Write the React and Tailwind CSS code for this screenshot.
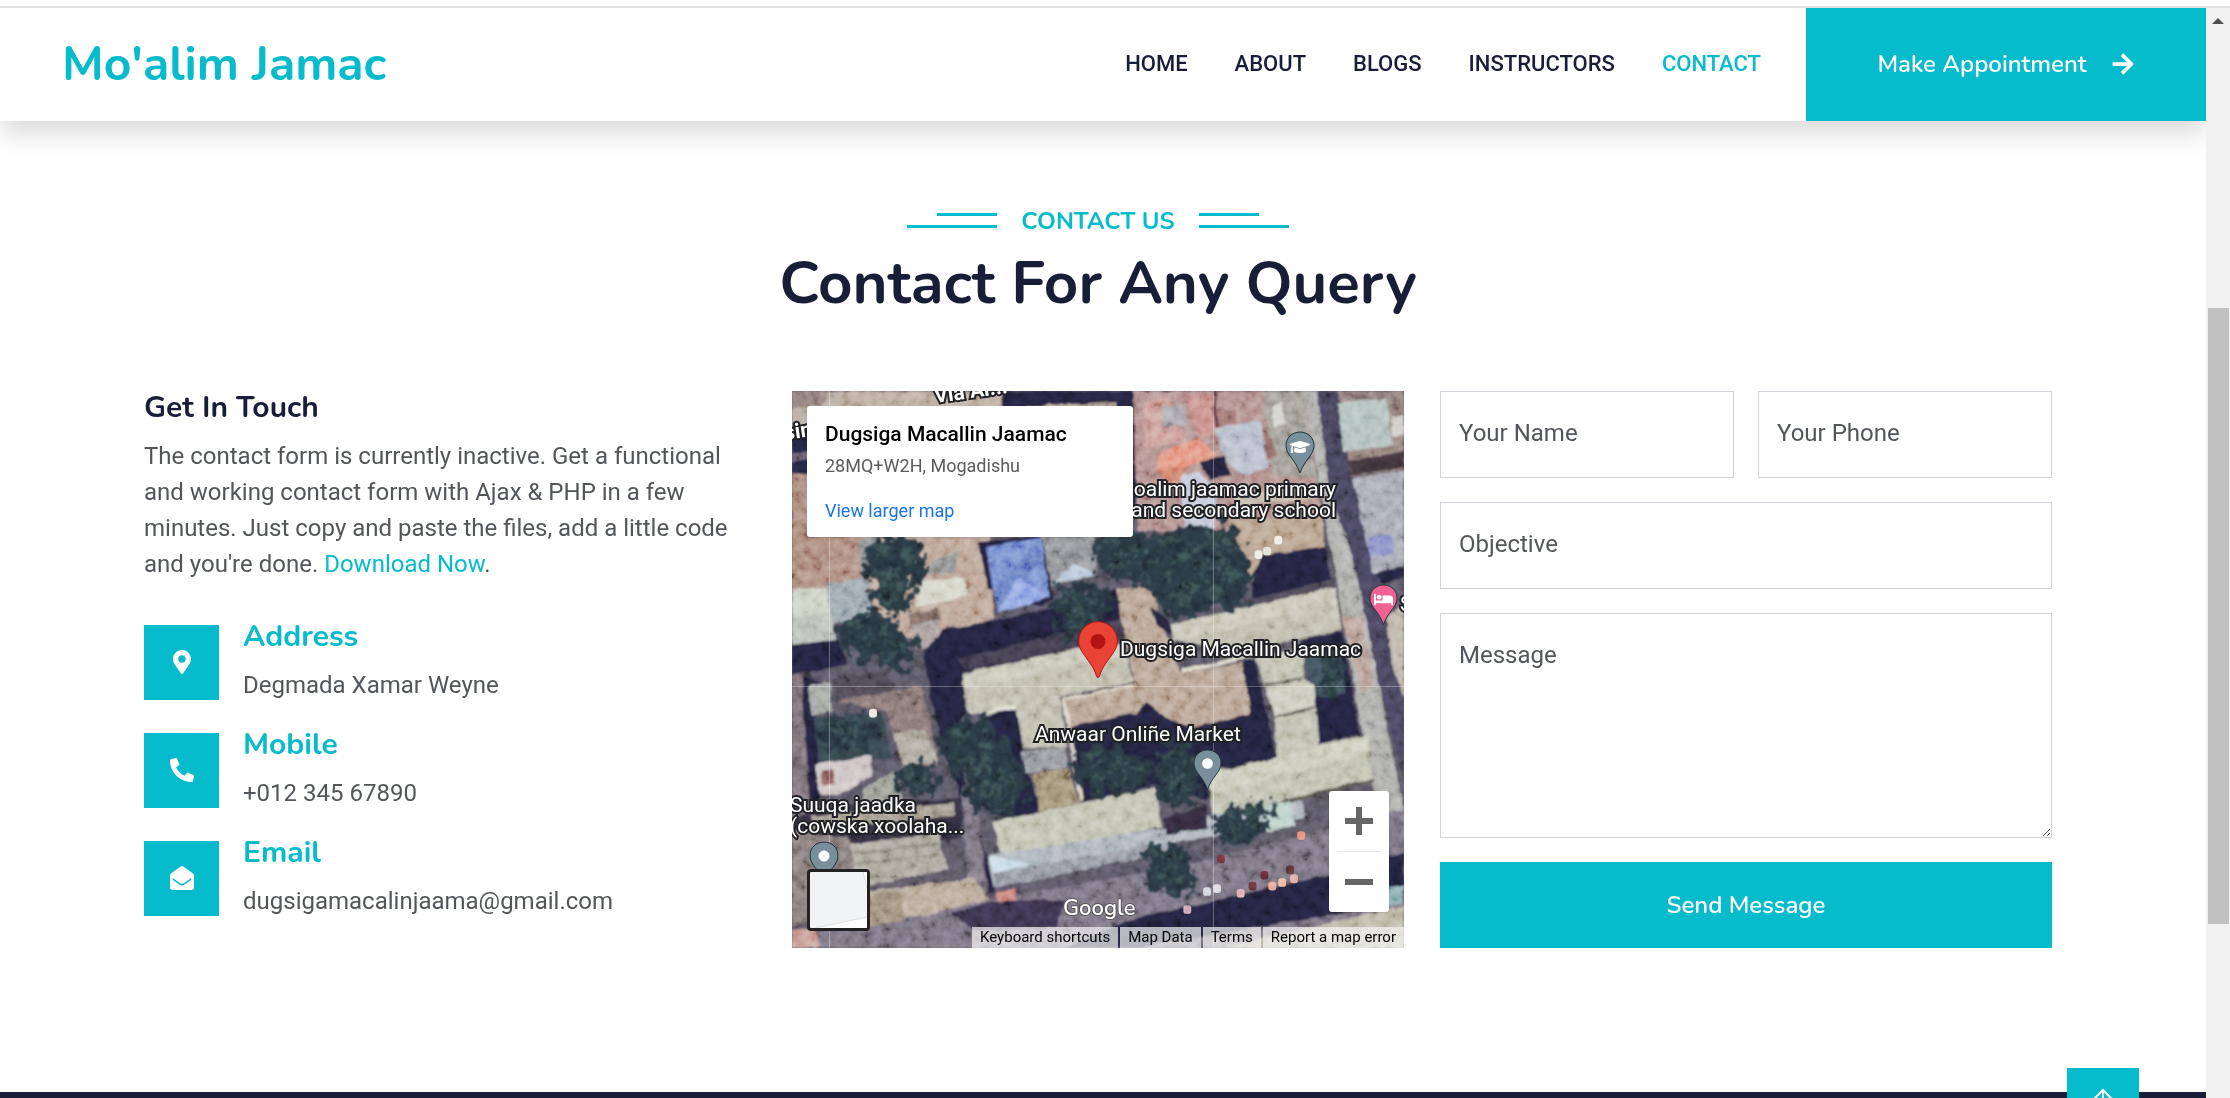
import React from "react";
import { FaArrowRight, FaMapMarkerAlt, FaPhoneAlt, FaEnvelopeOpen, FaGraduationCap, FaBed } from "react-icons/fa";

const NAV = ["HOME", "ABOUT", "BLOGS", "INSTRUCTORS", "CONTACT"];

const NAVY = "#24223c";
const ROOF = "#bab9a8";

/* Ground shapes of the aerial view, painted from back to front. */
const SHAPES = [
  ["#b5a597", "10,11 830,11 830,70 10,130"],
  ["#8d7a78", "10,11 95,11 95,45 10,60"],
  [NAVY, "540,11 880,11 895,330 830,330 830,40 540,62"],
  [NAVY, "10,125 60,115 60,250 10,245"],
  ["#6d6478", "10,185 60,178 60,200 10,210"],
  ["#a78578", "10,240 190,250 190,540 10,570"],
  ["#b89f90", "180,410 510,410 520,640 390,700 230,690"],
  ["#8b8f90", "180,420 230,415 200,540 185,530"],
  ["#c8cfc0", "10,562 98,556 118,705 10,718"],
  ["#b5beb5", "10,640 108,625 118,705 10,718"],
  ["#98a4ad", "98,545 200,530 215,645 112,655"],
  [NAVY, "10,715 130,700 150,770 10,800"],
  ["#878b88", "370,480 430,455 425,515 350,520"],
  ["#d2d3c4", "335,540 445,528 455,580 320,612"],
  ["#7e6a64", "305,630 375,612 385,650 310,665"],
  ["#a59a98", "310,660 382,645 390,715 325,725"],
  [NAVY, "390,672 560,640 840,560 850,700 440,790 450,905 390,1000 345,735"],
  ["#3f3b4c", "430,755 850,640 860,700 445,785"],
  [NAVY, "482,430 650,411 672,590 640,610 505,560"],
  ["#7287cb", "500,445 640,418 662,583 530,628"],
  ["#677cc0", "640,418 645,480 530,628 520,560"],
  ["#8ba0e2", "530,628 582,530 662,583"],
  ["#8a8c90", "640,411 772,411 785,520 668,550"],
  ["#b7c6d8", "668,548 722,490 782,520"],
  ["#ad8a87", "872,11 1310,11 1355,400 885,400"],
  ["#c99a93", "900,40 960,30 1010,150 900,170"],
  ["#a9a5ab", "945,50 995,50 1012,105 945,112"],
  ["#c58a85", "1005,25 1080,25 1085,130 1035,140"],
  ["#5a3540", "1072,11 1082,11 1090,110 1080,110"],
  ["#9a6f6c", "1085,65 1130,60 1145,120 1090,128"],
  ["#e2917b", "940,185 1035,142 1085,190 1010,222 965,292 932,225"],
  ["#cc7c69", "932,225 1010,222 965,292"],
  ["#b4bbc8", "1078,115 1195,92 1218,225 1150,245 1110,205"],
  ["#9d9a92", "1200,12 1305,12 1335,250 1225,245"],
  ["#cfcfc8", "1225,50 1250,45 1260,100 1228,112"],
  ["#8a6663", "1195,110 1225,150 1240,190 1215,200"],
  [NAVY, "1040,205 1105,190 1120,240 1070,262"],
  ["#bfc6d6", "990,250 1040,235 1085,290 1080,400 1005,400"],
  ["#b59e88", "1110,372 1350,350 1362,520 1180,560"],
  ["#c1b8a8", "1130,300 1350,270 1350,310 1140,330"],
  [NAVY, "1200,468 1360,440 1372,550 1170,600 1175,520"],
  ["#4b4655", "1130,600 1380,535 1382,555 1130,620"],
  ["#a9aaa6", "1305,11 1345,11 1560,1190 1558,1300 1475,1100"],
  ["#44425a", "1338,11 1390,11 1425,220 1470,420 1558,850 1558,1090 1500,850 1430,470 1370,300"],
  ["#b79d96", "1400,640 1450,635 1482,830 1452,850"],
  ["#8d7a76", "1390,11 1558,11 1558,230 1425,250"],
  ["#aebcb9", "1392,45 1515,32 1530,160 1405,183"],
  ["#cbc9c2", "1525,85 1558,75 1558,130 1530,140"],
  ["#3c3038", "1415,205 1558,178 1558,222 1430,246"],
  ["#a4a5b0", "1430,255 1558,230 1558,500 1480,518"],
  ["#8187c2", "1465,415 1528,408 1532,462 1470,470"],
  [NAVY, "1485,520 1558,500 1558,530 1500,545"],
  ["#b9b2a6", "1515,640 1558,600 1558,860 1530,780"],
  ["#b49e8d", "830,562 915,556 950,660 990,790 1148,765 1172,915 1010,960 890,905 715,945 695,865 875,820"],
  [NAVY, "915,610 960,640 975,690 930,660"],
  [NAVY, "705,945 880,905 905,875 960,920 1020,945 1170,905 1150,765 1180,750 1235,1030 1085,1060 1060,1145 925,1105 745,1150"],
  [NAVY, "1300,700 1402,678 1445,960 1345,990"],
  ["#3e5058", "1305,750 1395,730 1410,850 1330,860"],
  [ROOF, "440,797 590,760 730,725 850,715 872,815 690,862 705,1000 595,1002 578,885 455,908"],
  ["#c5c5b5", "440,797 730,725 850,715 855,745 735,765 448,845"],
  ["#d9d9cc", "480,905 576,880 582,890 500,916"],
  ["#d9d2c2", "695,866 868,822 870,828 704,872 745,1145 736,1148"],
  [NAVY, "495,912 578,892 595,1010 635,1175 560,1200 480,1140"],
  ["#8e9096", "588,1012 700,1000 705,1055 600,1072"],
  ["#9b8d72", "618,1072 706,1058 738,1160 635,1180"],
  ["#bfbfae", "518,1207 930,1112 946,1226 545,1315"],
  ["#3c3a3c", "545,1312 946,1222 948,1230 548,1322"],
  [ROOF, "970,660 1382,556 1400,672 1210,718 1000,790 1168,745 1180,755 975,700"],
  ["#c5c3b2", "970,660 1382,556 1390,600 975,705"],
  ["#bdbdac", "1182,752 1300,720 1305,808 1332,830 1335,880 1345,992 1465,965 1478,1085 1075,1196 1060,1072 1235,1030 1232,910"],
  ["#c9c9b8", "1060,1072 1235,1030 1465,965 1470,1015 1068,1130"],
  ["#55524c", "1075,1196 1478,1085 1480,1094 1078,1206"],
  ["#6b6960", "1205,822 1300,806 1303,815 1210,832"],
  ["#c9c8ba", "1218,838 1330,825 1332,885 1232,908"],
  ["#55524c", "1232,910 1332,886 1333,892 1234,918"],
  ["#dfdccc", "998,782 1165,742 1168,750 1000,792"],
  ["#756a70", "10,800 35,800 85,1165 10,1200"],
  [NAVY, "35,800 100,830 70,900 85,1050 80,1165 55,1165"],
  ["#9da19b", "50,830 105,820 110,900 60,915"],
  ["#4b4651", "110,810 250,790 265,850 120,865"],
  ["#80706e", "120,870 340,830 380,1050 290,1060 250,900"],
  ["#34444c", "65,920 240,900 262,1030 80,1050"],
  ["#a8a499", "265,960 345,950 380,1040 290,1050"],
  ["#c9bfc1", "72,1048 210,1022 212,1080 120,1135 80,1130"],
  ["#8b5f5c", "85,1065 112,1062 115,1105 88,1108"],
  ["#9a9b90", "190,1120 270,1065 290,1150 190,1165"],
  ["#332e40", "10,1200 90,1165 440,1140 440,1250 60,1300 10,1290"],
  ["#7f7675", "10,1230 150,1250 200,1420 10,1500"],
  ["#9e9788", "60,1190 420,1155 420,1190 60,1230"],
  ["#a5a196", "155,1270 380,1240 402,1340 180,1388"],
  ["#8b877d", "160,1290 385,1262 387,1270 162,1298"],
  ["#8b877d", "168,1320 392,1292 394,1300 170,1328"],
  [NAVY, "340,740 400,800 450,1120 500,1300 525,1405 470,1400 440,1150 385,980"],
  ["#746d78", "440,1100 475,1160 505,1400 455,1390"],
  ["#b5a594", "205,1400 470,1365 520,1440 300,1480 210,1450"],
  ["#9b8a78", "205,1410 280,1395 300,1500 205,1520"],
  ["#736d7a", "10,1515 200,1500 520,1420 1000,1330 1558,1170 1558,1557 10,1557"],
  ["#a8b0b8", "505,1300 950,1225 1060,1190 1300,1150 1310,1195 960,1270 520,1390"],
  ["#8f939c", "520,1350 960,1262 965,1290 525,1390"],
  ["#c8dbe4", "505,1300 540,1310 620,1320 520,1350"],
  ["#b9cfc8", "1200,1160 1270,1150 1285,1215 1205,1235"],
  ["#c98078", "525,1405 575,1392 580,1425 530,1432"],
  ["#322a3e", "950,1195 1060,1160 1060,1225 955,1245"],
  ["#38334c", "410,1460 520,1425 700,1425 680,1500 470,1510"],
  [NAVY, "860,1480 1380,1350 1558,1290 1558,1430 880,1557 700,1557"],
  ["#b9b5a2", "1100,1557 1400,1480 1558,1440 1558,1557"],
  ["#84a9b0", "1500,1395 1558,1380 1558,1430 1515,1440"],
  ["#c4998f", "10,1510 70,1500 80,1557 10,1557"],
];

/* cx, cy, rx, ry of the tree crowns */
const TREES = [
  [272, 480, 78, 75], [262, 560, 58, 65], [205, 690, 78, 65], [265, 725, 55, 60],
  [845, 460, 75, 75], [905, 490, 60, 70], [1010, 450, 110, 60], [1000, 560, 80, 75], [1090, 530, 85, 90],
  [745, 600, 78, 55], [735, 660, 55, 45], [1100, 440, 50, 60],
  [470, 1000, 85, 85], [520, 1090, 80, 90], [540, 1150, 60, 45], [800, 1060, 70, 70], [860, 1070, 60, 55],
  [985, 1050, 60, 70], [990, 1120, 60, 45], [330, 1090, 50, 50], [1140, 1215, 65, 50], [1180, 1190, 45, 35],
  [960, 1310, 60, 45], [970, 1370, 60, 40], [1380, 800, 40, 45], [150, 960, 80, 45],
];

/* x, y, colour of the vehicles and stalls in the street */
const SPOTS = [
  [1190, 465, "#e8ebe2"], [1212, 455, "#dfe2d6"], [1240, 425, "#eeeee6"], [1298, 1245, "#e8907c"],
  [1225, 1385, "#e8a088"], [1250, 1375, "#f0b7a2"], [1280, 1365, "#dfa29c"], [1145, 1405, "#e0aeb0"],
  [1010, 1450, "#d3a9b8"], [1095, 1310, "#6a3038"], [1060, 1400, "#cfd2da"], [1085, 1392, "#d8dade"],
  [1175, 1385, "#5e2f38"], [1205, 1355, "#5e2c35"], [1270, 1340, "#623338"], [215, 905, "#e8e3dc"],
];

function Satellite() {
  return (
    <svg viewBox="0 0 612 557" preserveAspectRatio="xMidYMid slice" className="absolute inset-0 h-full w-full" aria-hidden="true">
      <defs>
        <filter id="rough" x="0" y="0" width="100%" height="100%">
          <feTurbulence type="fractalNoise" baseFrequency="0.06" numOctaves="3" seed="4" />
          <feDisplacementMap in="SourceGraphic" scale="5" xChannelSelector="R" yChannelSelector="G" />
          <feGaussianBlur stdDeviation="0.8" />
        </filter>
        <filter id="leafy" x="0" y="0" width="100%" height="100%">
          <feTurbulence type="fractalNoise" baseFrequency="0.09" numOctaves="4" seed="9" />
          <feDisplacementMap in="SourceGraphic" scale="34" xChannelSelector="R" yChannelSelector="G" />
          <feGaussianBlur stdDeviation="1" />
        </filter>
        <filter id="grain" x="0" y="0" width="100%" height="100%">
          <feTurbulence type="fractalNoise" baseFrequency="0.1" numOctaves="3" seed="21" />
          <feColorMatrix values="1.6 0 0 0 -0.3  1.6 0 0 0 -0.3  1.6 0 0 0 -0.3  0 0 0 0 1" />
        </filter>
      </defs>
      <rect width="612" height="557" fill="#57525f" />
      <g filter="url(#rough)">
        <rect width="612" height="557" fill="#57525f" />
        <g transform="scale(0.3953 0.3603) translate(-10 -11)">
          {SHAPES.map(([fill, points], i) => (
            <polygon key={i} points={points} fill={fill} />
          ))}
        </g>
      </g>
      <g filter="url(#leafy)">
        <rect width="612" height="557" fill="transparent" />
        <g transform="scale(0.3953 0.3603) translate(-10 -11)">
          {TREES.map(([x, y, rx, ry], i) => (
            <ellipse key={i} cx={x} cy={y} rx={rx} ry={ry} fill="#26343c" />
          ))}
          {TREES.map(([x, y, rx, ry], i) => (
            <g key={i} fill="#35494a">
              <ellipse cx={x - rx * 0.4} cy={y - ry * 0.4} rx={rx * 0.3} ry={ry * 0.2} />
              <ellipse cx={x + rx * 0.35} cy={y - ry * 0.1} rx={rx * 0.28} ry={ry * 0.2} />
              <ellipse cx={x - rx * 0.1} cy={y + ry * 0.4} rx={rx * 0.3} ry={ry * 0.18} />
            </g>
          ))}
        </g>
      </g>
      <g transform="scale(0.3953 0.3603) translate(-10 -11)">
        {SPOTS.map(([x, y, fill], i) => (
          <rect key={i} x={x - 10} y={y - 12} width="20" height="24" rx="8" fill={fill} />
        ))}
      </g>
      <rect width="612" height="557" filter="url(#grain)" opacity="0.3" style={{ mixBlendMode: "overlay" }} />
      <path d="M37.500 0V557M421.500 0V557M0 295.500H612" stroke="#fff" strokeOpacity="0.3" />
    </svg>
  );
}

function Pin({ className, fill = "#78909c", children }) {
  return (
    <span className={`absolute ${className}`}>
      <svg viewBox="0 0 30 43" className="block w-full" aria-hidden="true">
        <path d="M15 1C7 1 1 7 1 14.500c0 5 2.500 8.500 5.500 12.500 3.500 4.700 6.500 9 8.500 15 2-6 5-10.300 8.500-15 3-4 5.500-7.500 5.500-12.500C29 7 23 1 15 1z" fill={fill} stroke="#263238" strokeWidth="1" />
        {children}
      </svg>
    </span>
  );
}

const LABEL =
  "absolute whitespace-nowrap text-[21px] leading-[21px] text-white [-webkit-text-stroke:4px_#202124] [paint-order:stroke_fill]";

function MapPanel() {
  return (
    <section aria-label="Map" className="relative min-h-[557px] overflow-hidden bg-[#57525f] font-[Roboto,sans-serif]">
      <Satellite />
      <span className={`${LABEL} left-[142px] top-[-10px] -rotate-8 font-bold`}>Via Al...</span>
      <span className={`${LABEL} left-[-8px] top-[30px] -rotate-8 font-bold`}>sin</span>
      <span className={`${LABEL} right-[68px] top-[88px] text-right`}>
        oalim jaamac primary
        <br />
        and secondary school
      </span>
      <span className={`${LABEL} left-[328px] top-[248px]`}>Dugsiga Macallin Jaamac</span>
      <span className={`${LABEL} left-[243px] top-[333px]`}>Anwaar Onliñe Market</span>
      <span className={`${LABEL} left-[-2px] top-[404px]`}>
        Suuqa jaadka
        <br />
        (cowska xoolaha...
      </span>
      <span className={`${LABEL} left-[608px] top-[203px]`}>S</span>

      <Pin className="left-[493px] top-[40px] w-[30px]">
        <FaGraduationCap x="5" y="6" size="20" color="#fff" />
      </Pin>
      <Pin className="left-[577px] top-[193px] w-[29px]" fill="#f06292">
        <FaBed x="5" y="6" size="20" color="#fff" />
      </Pin>
      <Pin className="left-[401px] top-[358px] w-[29px]">
        <circle cx="15" cy="15" r="5.500" fill="#fff" />
      </Pin>
      <Pin className="left-[17px] top-[450px] w-[30px]">
        <circle cx="15" cy="15" r="5.500" fill="#fff" />
      </Pin>
      <span className="absolute left-[286px] top-[230px] w-[40px]">
        <svg viewBox="0 0 40 57" className="block w-full" aria-hidden="true">
          <path d="M20 .7C9.200.7.700 9.200.700 20c0 6.500 3 10.500 7.300 16.500C12.500 42.500 16.500 48 18.500 55c.5 2 2.500 2 3 0 2-7 6-12.500 10.500-18.500C36.300 30.500 39.300 26.500 39.300 20 39.300 9.200 30.800.7 20 .7z" fill="#ea4335" stroke="#b31412" strokeWidth="1" />
          <circle cx="20" cy="20.500" r="7.500" fill="#b31412" />
        </svg>
      </span>

      <div className="absolute left-[15px] top-[15px] w-[326px] rounded-[3px] bg-white px-[18px] pb-[13px] pt-[14px] shadow">
        <h3 className="text-[21px] font-medium leading-[28px] text-black">Dugsiga Macallin Jaamac</h3>
        <p className="mt-[5px] text-[18px] leading-[26px] text-[#5b5b5b]">28MQ+W2H, Mogadishu</p>
        <a href="#map" className="mt-[19px] block text-[18px] leading-[26px] text-[#1a73e8]">
          View larger map
        </a>
      </div>

      <button type="button" aria-label="Show street map" className="absolute bottom-[17px] left-[15px] h-[62px] w-[63px] overflow-hidden rounded border-[3px] border-[#222] bg-[#f1f3f4]">
        <svg viewBox="0 0 57 56" className="block h-full w-full" aria-hidden="true">
          <path d="M5 56L57 45V56zM53 0h4v16z" fill="#fff" />
          <path d="M5 56L57 45M53 0l4 16" stroke="#dadce0" />
        </svg>
      </button>

      <div className="absolute bottom-9 right-[15px] flex w-[60px] flex-col items-center rounded-[3px] bg-white shadow">
        <button type="button" aria-label="Zoom in" className="grid h-[60px] w-full place-items-center">
          <svg viewBox="0 0 28 28" className="size-7" aria-hidden="true">
            <path d="M11 0h6v11h11v6H17v11h-6V17H0v-6h11z" fill="#666" />
          </svg>
        </button>
        <hr className="w-[45px] border-[#e6e6e6]" />
        <button type="button" aria-label="Zoom out" className="grid h-[60px] w-full place-items-center">
          <svg viewBox="0 0 28 28" className="size-7" aria-hidden="true">
            <path d="M0 11h28v6H0z" fill="#666" />
          </svg>
        </button>
      </div>

      <span className="absolute bottom-[26px] left-[271px] font-[Nunito,sans-serif] text-[22px] font-semibold leading-[28px] text-white [-webkit-text-stroke:2px_#555] [paint-order:stroke_fill]">
        Google
      </span>

      <div className="absolute bottom-0 right-0 flex gap-[2px] whitespace-nowrap text-[15px] leading-[21px] text-black">
        <button type="button" className="bg-[#f5f5f5]/70 px-2">Keyboard shortcuts</button>
        <button type="button" className="bg-[#f5f5f5]/70 px-2">Map Data</button>
        <a href="#terms" className="bg-[#f5f5f5]/70 px-2">Terms</a>
        <a href="#report" className="bg-[#f5f5f5]/70 px-2">Report a map error</a>
      </div>
    </section>
  );
}

const HEADING = "font-[Nunito,'Open_Sans',sans-serif]";

function ContactRow({ icon: Icon, title, children }) {
  return (
    <div className="flex items-center gap-6">
      <div className="grid size-[75px] shrink-0 place-items-center bg-[#06bbcc] text-white">
        <Icon className="size-6" aria-hidden="true" />
      </div>
      <div className="pb-[2px]">
        <h5 className={`${HEADING} mb-3 text-[30px] font-bold leading-9 text-[#06bbcc]`}>{title}</h5>
        <p>{children}</p>
      </div>
    </div>
  );
}

const FIELD =
  "block w-full border border-[#ced4da] bg-white px-[18px] pb-[26px] pt-[23px] text-[24px] leading-9 text-[#52565b] placeholder:text-[#52565b] placeholder:opacity-100";

export default function App() {
  return (
    <div className="flex h-screen flex-col overflow-hidden bg-white font-[Roboto,sans-serif] text-[24px] leading-9 text-[#52565b]">
      <div className="h-2 shrink-0 border-b-2 border-[#e2e3e2]" />
      <div className="flex min-h-0 flex-1">
        <div className="relative min-w-0 flex-1 overflow-hidden">
          <header className="flex h-[113px] items-stretch bg-white shadow-[0_12px_24px_rgba(0,0,0,0.15)]">
            <a href="#home" className={`${HEADING} flex items-center pb-[2px] pl-[62px] text-[48px] font-bold text-[#06bbcc]`}>
              Mo'alim Jamac
            </a>
            <nav className="ml-auto mr-[45px] flex items-center gap-[47px] pb-[2px] text-[22px] font-medium text-[#181d38]">
              {NAV.map((item) => (
                <a key={item} href={`#${item.toLowerCase()}`} className={item === "CONTACT" ? "text-[#06bbcc]" : ""}>
                  {item}
                </a>
              ))}
            </nav>
            <a href="#appointment" className={`${HEADING} flex w-[400px] items-center justify-center gap-6 bg-[#06bbcc] pb-[2px] text-[24px] font-semibold text-white`}>
              Make Appointment
              <FaArrowRight className="size-6" aria-hidden="true" />
            </a>
          </header>

          <main className="pb-36 pl-36 pr-[154px] pt-[82px]">
            <div className="flex flex-col items-center">
              <h6 className={`${HEADING} flex items-center gap-6 text-[24px] font-bold leading-9 text-[#06bbcc]`}>
                <span className="flex flex-col items-end gap-[9px] pb-[2px]">
                  <span className="h-[3px] w-[60px] bg-[#06bbcc]" />
                  <span className="h-[3px] w-[90px] bg-[#06bbcc]" />
                </span>
                CONTACT US
                <span className="flex flex-col items-start gap-[9px] pb-[2px]">
                  <span className="h-[3px] w-[60px] bg-[#06bbcc]" />
                  <span className="h-[3px] w-[90px] bg-[#06bbcc]" />
                </span>
              </h6>
              <h1 className={`${HEADING} mt-2 text-[60px] font-bold leading-[72px] text-[#181d38]`}>Contact For Any Query</h1>
            </div>

            <div className="mt-[72px] grid grid-cols-3 gap-9">
              <section>
                <h5 className={`${HEADING} text-[30px] font-bold leading-[34px] text-[#181d38]`}>Get In Touch</h5>
                <p className="mb-[37px] mt-[13px]">
                  The contact form is currently inactive. Get a functional and working contact form with Ajax &amp; PHP in a few
                  minutes. Just copy and paste the files, add a little code and you're done.{" "}
                  <a href="#download" className="text-[#06bbcc]">
                    Download Now
                  </a>
                  .
                </p>
                <div className="flex flex-col gap-[22px]">
                  <ContactRow icon={FaMapMarkerAlt} title="Address">Degmada Xamar Weyne</ContactRow>
                  <ContactRow icon={FaPhoneAlt} title="Mobile">+012 345 67890</ContactRow>
                  <ContactRow icon={FaEnvelopeOpen} title="Email">dugsigamacalinjaama@gmail.com</ContactRow>
                </div>
              </section>

              <MapPanel />

              <form className="flex flex-col gap-6">
                <div className="grid grid-cols-2 gap-6">
                  <input aria-label="Your Name" placeholder="Your Name" className={FIELD} />
                  <input aria-label="Your Phone" placeholder="Your Phone" className={FIELD} />
                </div>
                <input aria-label="Objective" placeholder="Objective" className={FIELD} />
                <textarea aria-label="Message" placeholder="Message" className={`${FIELD} h-[225px] resize-y`} />
                <button type="button" className={`${HEADING} h-[86px] w-full bg-[#06bbcc] text-[24px] font-semibold text-white`}>
                  Send Message
                </button>
              </form>
            </div>
          </main>

          <footer className="h-24 bg-[#181d38]" />

          <a href="#top" aria-label="Back to top" className="absolute bottom-[-42px] right-[67px] flex size-[72px] justify-center bg-[#06bbcc] pt-5 text-white">
            <svg viewBox="0 0 24 28" className="h-7 w-6" fill="none" stroke="currentColor" strokeWidth="2" aria-hidden="true">
              <path d="M12 27V2M3 11L12 2l9 9" />
            </svg>
          </a>
        </div>

        <div className="flex w-6 shrink-0 flex-col items-center bg-[#f1f1f1]" aria-hidden="true">
          <svg viewBox="0 0 12 6" className="mt-[10px] h-[6px] w-3">
            <path d="M0 6L6 0l6 6z" fill="#505050" />
          </svg>
          <div className="mt-[284px] h-[616px] w-[21px] bg-[#c1c1c1]" />
        </div>
      </div>
    </div>
  );
}
